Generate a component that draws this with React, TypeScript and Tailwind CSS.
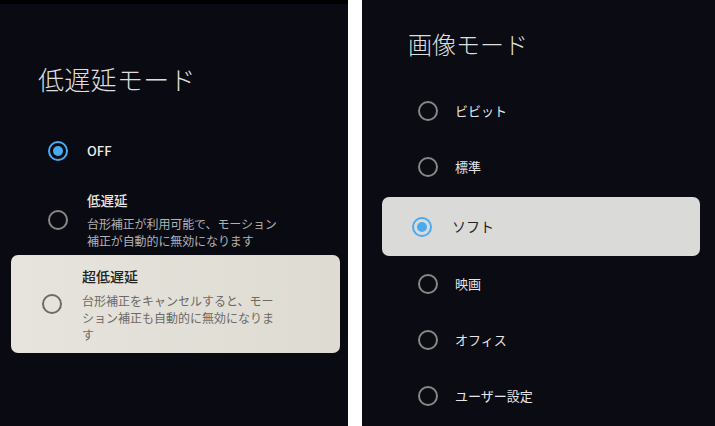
const FONT = '"Noto Sans CJK JP", "Noto Sans", sans-serif';

type RadioProps = { checked?: boolean; onCard?: boolean };

// ラジオボタン：選択時は青いリング＋ドット
function Radio({ checked, onCard }: RadioProps) {
  if (checked) {
    return (
      <span className="w-5 h-5 shrink-0 rounded-full border-2 border-[#4aaaf0] flex items-center justify-center">
        <span className="w-[10px] h-[10px] rounded-full bg-[#4aaaf0]" />
      </span>
    );
  }
  return (
    <span
      className={
        onCard
          ? 'w-5 h-5 shrink-0 rounded-full border-2 border-[#6f6967]'
          : 'w-5 h-5 shrink-0 rounded-full border-2 border-[#8a8685]'
      }
    />
  );
}

function LatencyPanel() {
  return (
    <div className="w-[348px] h-full bg-[#0a0b12] border-t-4 border-black flex flex-col">
      <div className="pt-[59px] pl-[38px] h-[91px] text-[26px] leading-[32px] font-light text-[#dedede] tracking-[0.3px]">
        低遅延モード
      </div>

      <div className="mt-[46px] pl-[48px] flex items-center h-5">
        <Radio checked />
        <span className="ml-[19px] text-[13px] font-medium text-[#ececec]">OFF</span>
      </div>

      <div className="mt-[30px] pl-[48px] flex items-center">
        <Radio />
        <div className="ml-[19px]">
          <div className="text-[13.5px] leading-[18px] font-medium text-[#e6e6e6]">低遅延</div>
          <div className="mt-[6px] text-[12px] leading-[17px] text-[#b2b2b2] tracking-[-0.1px]">
            <div>台形補正が利用可能で、モーション</div>
            <div>補正が自動的に無効になります</div>
          </div>
        </div>
      </div>

      <div className="mt-[6px] ml-[11px] w-[329px] h-[98px] rounded-[7px] bg-gradient-to-r from-[#e6e4dd] to-[#dedbd2] flex items-center pl-[31px]">
        <Radio onCard />
        <div className="ml-[20px] pt-[2px]">
          <div className="text-[14px] leading-[18px] font-medium text-[#222]">超低遅延</div>
          <div className="mt-[7px] text-[12px] leading-[17px] text-[#6d6966]">
            <div>台形補正をキャンセルすると、モー</div>
            <div>ション補正も自動的に無効になりま</div>
            <div>す</div>
          </div>
        </div>
      </div>
    </div>
  );
}

const PICTURE_MODES = [
  { label: 'ビビット' },
  { label: '標準' },
  { label: 'ソフト', selected: true },
  { label: '映画' },
  { label: 'オフィス' },
  { label: 'ユーザー設定' },
];

function PictureModePanel() {
  return (
    <div className="flex-1 h-full bg-[#0a0b13] flex flex-col">
      <div className="pt-[29px] pl-[46px] h-[59px] text-[24px] leading-[30px] font-light text-[#dedede]">
        画像モード
      </div>
      <div className="mt-[24px] flex flex-col">
        {PICTURE_MODES.map((m) =>
          m.selected ? (
            <div
              key={m.label}
              className="mt-[2px] ml-[20px] w-[318px] h-[59px] rounded-[7px] bg-[#dadbd9] flex items-center pl-[30px]"
            >
              <Radio checked />
              <span className="ml-[20px] text-[14px] text-[#222]">{m.label}</span>
            </div>
          ) : (
            <div key={m.label} className="h-[56px] flex items-center pl-[56px]">
              <Radio />
              <span className="ml-[17px] text-[13px] text-[#e6e6e6]">{m.label}</span>
            </div>
          )
        )}
      </div>
    </div>
  );
}

export default function App() {
  return (
    <div className="w-[715px] h-[426px] bg-white flex gap-[14px] overflow-hidden" style={{ fontFamily: FONT }}>
      <LatencyPanel />
      <PictureModePanel />
    </div>
  );
}
